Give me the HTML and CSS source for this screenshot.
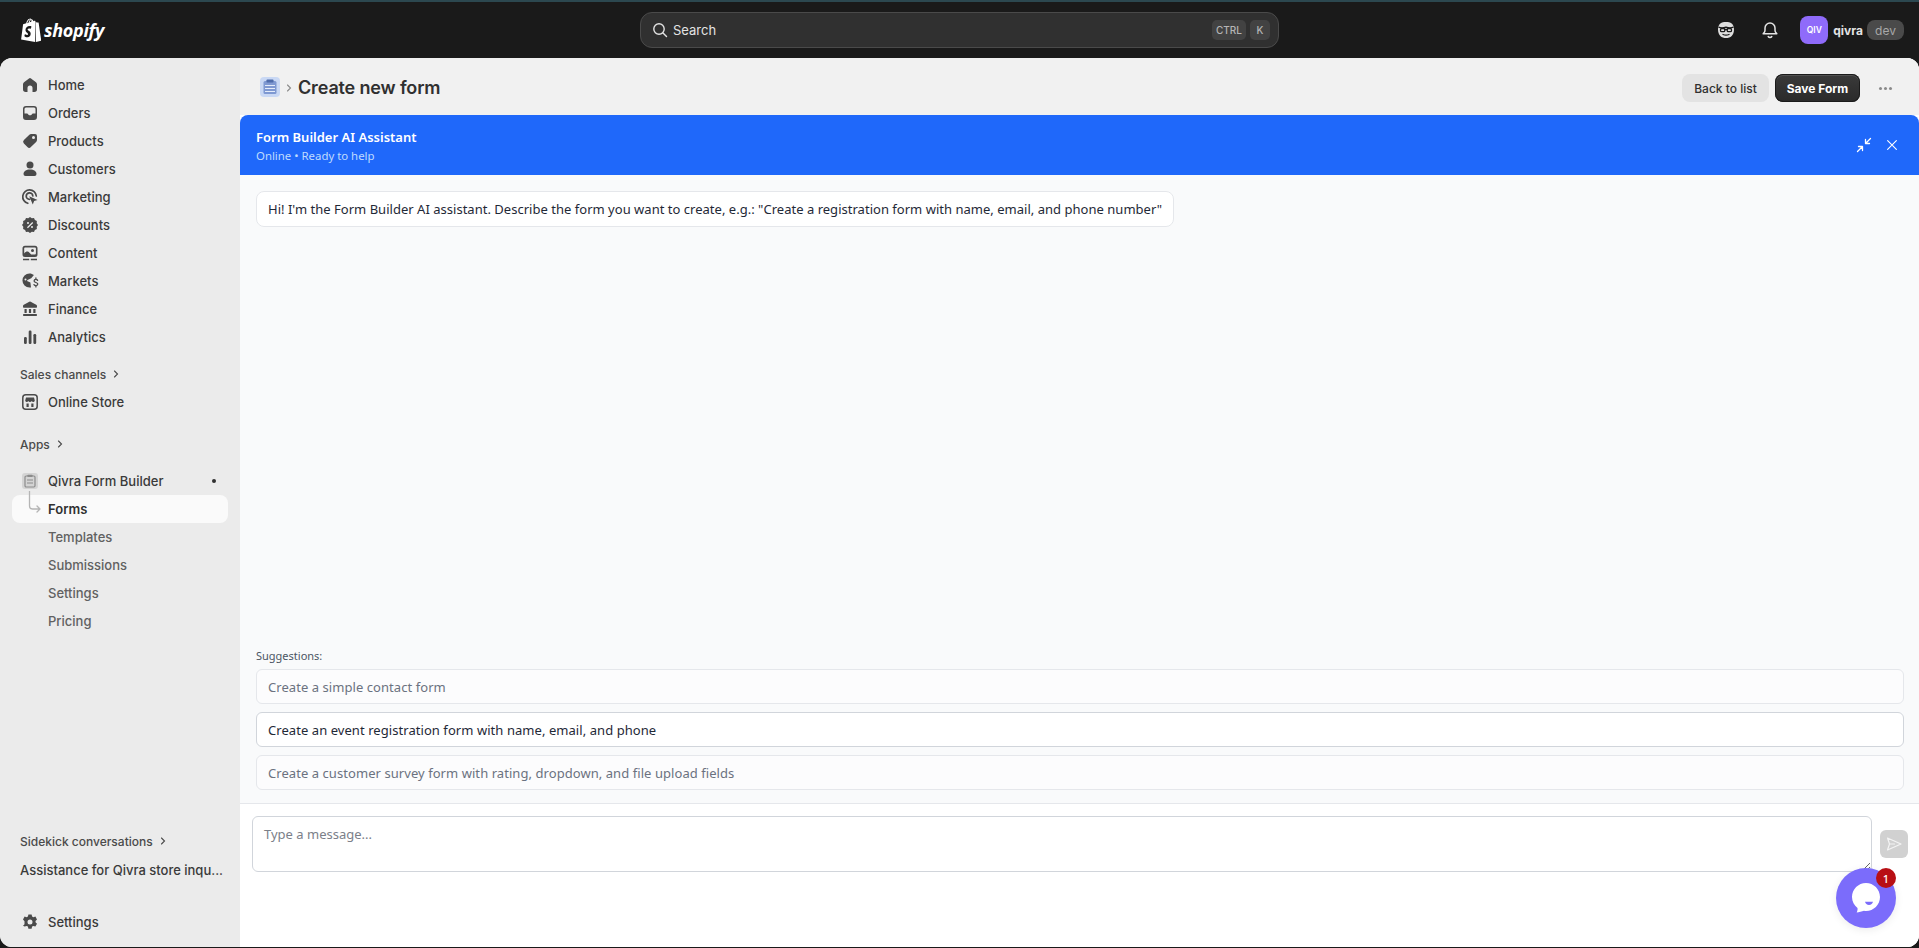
FILE: index.html
```html
<!DOCTYPE html>
<html lang="en">
<head>
<meta charset="utf-8">
<title>Create new form</title>
<link rel="stylesheet" href="styles.css">
</head>
<body>
<header class="topbar">
  <div class="brand">
    <svg class="brand-bag" viewBox="0 0 20 23"><path fill="#fff" d="M13.6 2.7 12.8 3c-.3-.9-.8-1.900-1.800-1.900h-.1C10.600.7 10.200.5 9.900.5 7.500.5 6.300 3.500 5.900 5L3.600 5.700c-.7.200-.7.200-.8.900L1 20.600 14.500 23V2.600c-.4 0-.7 0-.9.100ZM10.700 3.600l-1.500.500c.3-1.100.8-2.100 1.500-2.500.2.500.3 1.200 0 2ZM9.800 1.200c.1 0 .3 0 .4.100-.8.400-1.700 1.400-2.100 3.300L6.900 5c.4-1.300 1.300-3.800 2.900-3.800ZM15.300 22.900l5-1.200L17.800 4.500c0-.1-.1-.2-.2-.2l-1.800-.100-1-1z"/><path fill="#1a1a1a" d="M10.900 8.300 10.200 10.500s-.7-.4-1.600-.4c-1.300 0-1.300.8-1.300 1 0 1.100 2.900 1.500 2.900 4.100 0 2-1.300 3.300-3 3.300-2.100 0-3.100-1.300-3.100-1.300l.6-1.800s1.100.9 2 .9c.6 0 .9-.5.9-.8 0-1.400-2.400-1.500-2.400-3.900 0-2 1.400-3.900 4.300-3.900 1.100 0 1.400.6 1.400.6Z"/></svg>
    <span class="brand-name">shopify</span>
  </div>
  <div class="search">
    <svg class="search-icon" viewBox="0 0 16 16"><circle cx="7" cy="7" r="5.2" fill="none" stroke="#e3e3e3" stroke-width="1.400"/><path d="m11 11 3.500 3.500" stroke="#e3e3e3" stroke-width="1.400" stroke-linecap="round"/></svg>
    <span class="search-label">Search</span>
    <span class="kbd kbd-ctrl">CTRL</span>
    <span class="kbd">K</span>
  </div>
  <div class="top-actions">
    <svg class="top-icon top-icon-face" viewBox="0 0 20 20"><path fill="#dedede" d="M10 2c-4.500 0-8 1.800-8 7.500C2 15.500 5.500 18 10 18s8-2.500 8-8.500C18 3.800 14.500 2 10 2Z"/><path fill="none" stroke="#1a1a1a" stroke-width="1.400" d="M2.500 7.200c2.500 1 4.500 1 7.500 0 3 1 5 1 7.500 0"/><rect x="4.500" y="8.500" width="4.300" height="3.200" rx="1.200" fill="none" stroke="#1a1a1a" stroke-width="1.300"/><rect x="11.200" y="8.500" width="4.300" height="3.200" rx="1.200" fill="none" stroke="#1a1a1a" stroke-width="1.300"/><path d="M8.800 9.500h2.400M7 14.500c2 .8 4 .8 6 0" fill="none" stroke="#1a1a1a" stroke-width="1.300" stroke-linecap="round"/></svg>
    <svg class="top-icon top-icon-bell" viewBox="0 0 20 20"><path fill="none" stroke="#e3e3e3" stroke-width="1.500" stroke-linejoin="round" d="M10 3a5 5 0 0 0-5 5v2.200c0 1-.4 1.900-1.200 2.800l-.6.800h13.600l-.6-.8c-.8-.9-1.200-1.800-1.200-2.800V8a5 5 0 0 0-5-5Z"/><path fill="none" stroke="#e3e3e3" stroke-width="1.500" stroke-linecap="round" d="M8.200 16.500c.4.600 1 1 1.800 1s1.400-.4 1.800-1"/></svg>
    <div class="avatar">QIV</div>
    <span class="shop-name">qivra</span>
    <span class="dev-pill">dev</span>
  </div>
</header>

<div class="shell">
  <nav class="sidebar">
    <ul class="nav-list">
      <li class="nav-item"><svg class="nav-icon" viewBox="0 0 20 20"><path d="M9 3.400a1.700 1.700 0 0 1 2 0l5 3.900c.7.600 1 1.300 1 2.200v4.800a2.700 2.700 0 0 1-2.700 2.700H12.500v-4a2.500 2.500 0 0 0-5 0v4H5.700A2.700 2.700 0 0 1 3 14.300V9.500c0-.9.300-1.600 1-2.200z"/></svg>Home</li>
      <li class="nav-item"><svg class="nav-icon" viewBox="0 0 20 20"><path fill-rule="evenodd" d="M6 3h8a3 3 0 0 1 3 3v8a3 3 0 0 1-3 3H6a3 3 0 0 1-3-3V6a3 3 0 0 1 3-3Zm-1.500 7.500V6A1.500 1.500 0 0 1 6 4.500h8A1.500 1.500 0 0 1 15.500 6v4.500H13c-.5 0-.8.200-1 .6l-.4.700c-.2.300-.5.500-.9.500H9.300c-.4 0-.7-.200-.9-.5l-.4-.7c-.2-.4-.5-.6-1-.6z"/></svg>Orders</li>
      <li class="nav-item"><svg class="nav-icon" viewBox="0 0 20 20"><path fill-rule="evenodd" d="M11.200 3H15a2 2 0 0 1 2 2v3.800c0 .8-.3 1.500-.9 2.100l-5.200 5.200a2.500 2.500 0 0 1-3.500 0l-3.500-3.500a2.500 2.500 0 0 1 0-3.500l5.200-5.200A3 3 0 0 1 11.200 3Zm2.300 5a1.500 1.500 0 1 0 0-3 1.500 1.500 0 0 0 0 3Z"/></svg>Products</li>
      <li class="nav-item"><svg class="nav-icon" viewBox="0 0 20 20"><circle cx="10" cy="6" r="3.500"/><path d="M3.500 15c0-2.500 2.500-4.500 6.500-4.500s6.500 2 6.500 4.500a2 2 0 0 1-2 2h-9a2 2 0 0 1-2-2Z"/></svg>Customers</li>
      <li class="nav-item"><svg class="nav-icon" viewBox="0 0 20 20"><path fill="none" stroke="currentColor" stroke-width="1.700" stroke-linecap="round" d="M7.800 16.300A6.800 6.800 0 1 1 16.300 9M9.600 12.400A3.300 3.300 0 1 1 12.800 9"/><path d="M9.200 9.200l8.300 3.700-3.400 1.200-1.300 3.500z"/></svg>Marketing</li>
      <li class="nav-item"><svg class="nav-icon" viewBox="0 0 20 20"><path fill-rule="evenodd" d="M10 2l1.800 1.300 2.200-.2.900 2 2 .9-.2 2.200L18 10l-1.300 1.800.2 2.200-2 .9-.9 2-2.200-.2L10 18l-1.800-1.300-2.200.2-.9-2-2-.9.2-2.200L2 10l1.300-1.800-.2-2.200 2-.9.9-2 2.200.2ZM12.300 7 7 12.300l.9.900 5.300-5.300ZM8 8.900a1 1 0 1 0 0-2 1 1 0 0 0 0 2Zm4 4.200a1 1 0 1 0 0-2 1 1 0 0 0 0 2Z"/></svg>Discounts</li>
      <li class="nav-item"><svg class="nav-icon" viewBox="0 0 20 20"><path fill-rule="evenodd" d="M5 2.800h10a2.500 2.500 0 0 1 2.500 2.500v6.200a2.500 2.500 0 0 1-2.500 2.500H5a2.500 2.500 0 0 1-2.500-2.500V5.300A2.500 2.500 0 0 1 5 2.800Zm-.8 7.700c1.500-2 3-2.500 4.500-1.500l2.500 2.500H15c.6 0 .9-.4.900-1V5.300c0-.5-.4-.9-.9-.9H5c-.5 0-.8.400-.8.900ZM12.500 9a1.500 1.500 0 1 0 0-3 1.500 1.500 0 0 0 0 3Z"/><path d="M3 15.800h6.200v1.400H3zM10.800 15.800H17v1.400h-6.200z"/></svg>Content</li>
      <li class="nav-item"><svg class="nav-icon" viewBox="0 0 20 20"><path fill-rule="evenodd" d="M9.500 2.500c1.700 0 3.200.6 4.400 1.500l-2.700 3.200-3.700 1.800c-.5.300-.5 1 0 1.200l2.900 1.300.6 4.900c-.5.100-1 .2-1.500.2a7 7 0 0 1 0-14.100Zm-4 5a1 1 0 0 0 0 2 1 1 0 0 0 0-2Z"/><path fill="none" stroke="currentColor" stroke-width="1.300" stroke-linecap="round" d="M17.600 9.400c-.3-.6-1-1-1.700-1-1 0-1.800.6-1.800 1.500 0 2 3.700 1.200 3.700 3.200 0 .9-.8 1.500-1.900 1.500-.8 0-1.500-.4-1.900-1M15.900 7v1.300M15.900 14.600v1.300"/></svg>Markets</li>
      <li class="nav-item"><svg class="nav-icon" viewBox="0 0 20 20"><path d="M9.300 2.800a1.500 1.500 0 0 1 1.400 0l5.500 3c.5.300.8.800.8 1.300V8a.7.700 0 0 1-.7.700H3.700A.7.700 0 0 1 3 8v-.9c0-.5.300-1 .8-1.300zM4.500 10h2.200v4H4.500zM8.900 10h2.200v4H8.900zM13.300 10h2.200v4h-2.200zM3.700 15h12.600c.4 0 .7.300.7.700v.6c0 .4-.3.700-.7.700H3.700a.7.700 0 0 1-.7-.7v-.6c0-.4.300-.7.700-.7Z"/></svg>Finance</li>
      <li class="nav-item"><svg class="nav-icon" viewBox="0 0 20 20"><rect x="4" y="10" width="2.800" height="7" rx="1.200"/><rect x="8.700" y="3.500" width="2.800" height="13.500" rx="1.200"/><rect x="13.400" y="7" width="2.800" height="10" rx="1.200"/></svg>Analytics</li>
    </ul>

    <div class="section-head section-sales">Sales channels<svg class="chev" viewBox="0 0 10 10"><path d="m3.500 2 3 3-3 3" fill="none" stroke="currentColor" stroke-width="1.100" stroke-linecap="round"/></svg></div>
    <div class="nav-item"><svg class="nav-icon" viewBox="0 0 20 20"><rect x="2.800" y="2.800" width="14.400" height="14.400" rx="3" fill="none" stroke="currentColor" stroke-width="1.500"/><path d="M6 5.500h8l.8 3a1.600 1.600 0 0 1-3 .6 2.100 2.100 0 0 1-3.600 0 1.600 1.600 0 0 1-3-.6zM6.500 11.500h2.200v3.500H6.500zM11.300 11.500h2.200v3.500h-2.200z"/></svg>Online Store</div>

    <div class="section-head section-apps">Apps<svg class="chev" viewBox="0 0 10 10"><path d="m3.500 2 3 3-3 3" fill="none" stroke="currentColor" stroke-width="1.100" stroke-linecap="round"/></svg></div>
    <div class="nav-item app-head">
      <svg class="nav-icon app-icon" viewBox="0 0 20 20"><rect x="2" y="2" width="16" height="16" rx="3" fill="#d4d4d4"/><rect x="5" y="5" width="10" height="11" rx="1.200" fill="none" stroke="#8c8c8c" stroke-width="1.200"/><rect x="7.500" y="3.700" width="5" height="2.300" rx=".6" fill="#8c8c8c"/><path d="M7 9h6M7 12h6" stroke="#8c8c8c" stroke-width="1.100"/></svg>
      <span class="app-name">Qivra Form Builder</span>
      <span class="app-dot"></span>
    </div>
    <div class="nav-item sub-item sub-active">
      <svg class="tree" viewBox="0 0 14 26"><path d="M1.500 0v15a3 3 0 0 0 3 3H12M9 15l3 3-3 3" fill="none" stroke="#b5b5b5" stroke-width="1.300" stroke-linecap="round" stroke-linejoin="round"/></svg>
      Forms
    </div>
    <div class="nav-item sub-item">Templates</div>
    <div class="nav-item sub-item">Submissions</div>
    <div class="nav-item sub-item">Settings</div>
    <div class="nav-item sub-item">Pricing</div>

    <div class="section-head section-sidekick">Sidekick conversations<svg class="chev" viewBox="0 0 10 10"><path d="m3.500 2 3 3-3 3" fill="none" stroke="currentColor" stroke-width="1.100" stroke-linecap="round"/></svg></div>
    <div class="section-head conv">Assistance for Qivra store inqu...</div>
    <div class="nav-item nav-settings"><svg class="nav-icon" viewBox="0 0 20 20"><path fill-rule="evenodd" d="M8.400 2.500h3.200l.5 2.100 1.300.7 2-.7 1.600 2.800-1.500 1.500v1.400l1.500 1.500-1.600 2.800-2-.7-1.300.7-.5 2.100H8.400l-.5-2.100-1.300-.7-2 .7L3 13.800l1.500-1.500V9.300L3 7.400l1.600-2.800 2 .7 1.300-.7ZM10 12.500a2.500 2.500 0 1 0 0-5 2.500 2.500 0 0 0 0 5Z"/></svg>Settings</div>
  </nav>

  <main class="main">
    <div class="titlebar">
      <svg class="title-icon" viewBox="0 0 20 20"><rect width="20" height="20" rx="4" fill="#c9d8f4"/><rect x="3.500" y="4" width="13" height="13" rx="1.500" fill="#7f99d2"/><rect x="6.500" y="2.500" width="7" height="3" rx=".8" fill="#4f6cab"/><path d="M5 8.500h10M5 11.500h10M5 14.500h10" stroke="#e4ecfa" stroke-width="1"/></svg>
      <svg class="title-chev" viewBox="0 0 10 10"><path d="m3.500 2 3 3-3 3" fill="none" stroke="#8a8a8a" stroke-width="1.100" stroke-linecap="round"/></svg>
      <h1 class="title">Create new form</h1>
      <button class="btn btn-plain">Back to list</button>
      <button class="btn btn-dark">Save Form</button>
      <span class="more"><i></i><i></i><i></i></span>
    </div>

    <section class="chat">
      <div class="chat-head">
        <div class="chat-head-text">
          <div class="chat-title">Form Builder AI Assistant</div>
          <div class="chat-sub">Online • Ready to help</div>
        </div>
        <svg class="head-icon head-collapse" viewBox="0 0 16 16"><path d="M1.500 14.500 6.500 9.500M2.500 9.500h4v4M14.500 1.500l-5 5M13.500 6.500h-4v-4" fill="none" stroke="#fff" stroke-width="1.300" stroke-linecap="round" stroke-linejoin="round"/></svg>
        <svg class="head-icon head-close" viewBox="0 0 16 16"><path d="m3 3 10 10M13 3 3 13" fill="none" stroke="#fff" stroke-width="1.300" stroke-linecap="round"/></svg>
      </div>

      <div class="chat-body">
        <div class="bubble">Hi! I'm the Form Builder AI assistant. Describe the form you want to create, e.g.: "Create a registration form with name, email, and phone number"</div>
        <div class="suggest">
          <div class="suggest-label">Suggestions:</div>
          <div class="suggest-item">Create a simple contact form</div>
          <div class="suggest-item suggest-hover">Create an event registration form with name, email, and phone</div>
          <div class="suggest-item">Create a customer survey form with rating, dropdown, and file upload fields</div>
        </div>
      </div>

      <div class="composer">
        <textarea class="composer-input" placeholder="Type a message..."></textarea>
        <button class="send" aria-label="Send"><svg viewBox="0 0 16 16"><path d="M1.500 2 15 8 1.500 14l2-6zM3.500 8h5" fill="none" stroke="#f4f4f4" stroke-width="1.200" stroke-linejoin="round" stroke-linecap="round"/></svg></button>
      </div>
    </section>

    <div class="widget">
      <svg class="widget-icon" viewBox="0 0 30 32"><path fill="#fff" d="M15 1C7.300 1 1 7.300 1 15c0 4.500 2.200 8.500 5.500 11 .3 1.500-.2 3-.8 4.500 2.200-.2 5.300-1.100 7.300-1.700.7.100 1.300.2 2 .2 7.700 0 14-6.300 14-14S22.700 1 15 1Z"/><path fill="#7b6cfb" d="M14 19.800h8c-.4 1.800-2 3.200-4 3.200s-3.600-1.400-4-3.200Z"/></svg>
      <span class="widget-badge">1</span>
    </div>
  </main>
</div>
</body>
</html>
```

FILE: styles.css
```css
* { box-sizing: border-box; }
html, body { margin: 0; height: 100%; }
body {
  height: 948px;
  overflow: hidden;
  background: #1a1a1a;
  font-family: Inter, "Liberation Sans", sans-serif;
  display: flex;
  flex-direction: column;
}

/* top bar */
.topbar {
  height: 58px;
  flex: none;
  border-top: 2px solid #2c4850;
  display: grid;
  grid-template-columns: 1fr 639px 1fr;
  align-items: center;
  padding: 0 15px;
  color: #e3e3e3;
}
.brand { display: flex; align-items: center; gap: 3px; margin-left: 5px; }
.brand-bag { width: 21px; height: 24px; }
.brand-name {
  font-family: "Open Sans", sans-serif;
  font-size: 18px;
  font-weight: 700;
  font-style: italic;
  color: #fff;
  letter-spacing: -0.3px;
}
.search {
  height: 36px;
  display: flex;
  align-items: center;
  background: #303030;
  border: 1px solid #4a4a4a;
  border-radius: 12px;
  padding: 0 8px 0 11px;
  gap: 4px;
}
.search-icon { width: 16px; height: 16px; }
.search-label { font-size: 13px; color: #e3e3e3; flex: 1; margin-left: 1px; }
.kbd {
  height: 20px;
  min-width: 20px;
  padding: 0 4px;
  border-radius: 5px;
  background: #424242;
  color: #b5b5b5;
  font-size: 10px;
  font-weight: 500;
  display: flex;
  align-items: center;
  justify-content: center;
}
.kbd-ctrl { width: 34px; }
.top-actions { display: flex; align-items: center; justify-content: flex-end; }
.top-icon { width: 20px; height: 20px; }
.top-icon-face { margin-right: 24px; }
.top-icon-bell { margin-right: 20px; }
.avatar {
  width: 28px;
  height: 28px;
  border-radius: 8px;
  background: #8f6bfa;
  color: #fff;
  font-size: 8.500px;
  font-weight: 600;
  display: flex;
  align-items: center;
  justify-content: center;
}
.shop-name { font-size: 12px; font-weight: 650; color: #e3e3e3; margin-left: 5px; }
.dev-pill {
  margin-left: 4px;
  height: 20px;
  width: 37px;
  border-radius: 8px;
  background: #4a4a4a;
  color: #a8a8a8;
  font-size: 12px;
  display: flex;
  align-items: center;
  justify-content: center;
}

/* shell */
.shell {
  height: 889px;
  flex: none;
  display: flex;
  border-radius: 12px;
  overflow: hidden;
  background: #fff;
}

/* sidebar */
.sidebar {
  width: 240px;
  flex: none;
  background: #ebebeb;
  padding: 13px 12px 11px;
  display: flex;
  flex-direction: column;
  color: #303030;
}
.nav-list { list-style: none; margin: 0; padding: 0; }
.nav-item {
  height: 28px;
  display: flex;
  align-items: center;
  padding-left: 8px;
  gap: 8px;
  border-radius: 8px;
  font-size: 13px;
  font-weight: 450;
  color: #3a3a3a;
}
.nav-icon { width: 20px; height: 20px; fill: #4a4a4a; color: #4a4a4a; flex: none; }
.section-head {
  height: 28px;
  display: flex;
  align-items: center;
  padding-left: 8px;
  font-size: 12px;
  font-weight: 500;
  color: #4a4a4a;
}
.chev { width: 10px; height: 10px; margin-left: 5px; }
.section-sales { margin-top: 9px; }
.section-apps { margin-top: 14px; margin-bottom: 9px; }
.section-sidekick { margin-top: auto; }
.conv { font-size: 13px; color: #3a3a3a; margin-top: 1px; }
.nav-settings { margin-top: 24px; }
.app-name { flex: 1; }
.app-dot {
  width: 4px;
  height: 4px;
  border-radius: 50%;
  background: #303030;
  margin-right: 12px;
}
.sub-item { padding-left: 36px; color: #616161; position: relative; }
.sub-active { background: #fafafa; color: #303030; font-weight: 600; }
.tree {
  position: absolute;
  left: 16px;
  top: -4px;
  width: 14px;
  height: 26px;
}

/* main */
.main {
  flex: 1;
  min-width: 0;
  display: flex;
  flex-direction: column;
  background: #fff;
  position: relative;
}
.titlebar {
  height: 57px;
  flex: none;
  background: #f1f1f1;
  display: flex;
  align-items: center;
  padding: 3px 26px 0 20px;
}
.title-icon { width: 20px; height: 20px; flex: none; margin-top: -2px; }
.title-chev { width: 10px; height: 10px; margin: 0 4px; }
.title {
  margin: -1px auto 0 0;
  font-size: 18px;
  font-weight: 600;
  letter-spacing: -0.15px;
  color: #303030;
}
.btn {
  height: 28px;
  border: 0;
  border-radius: 8px;
  font-family: inherit;
  font-size: 12px;
  font-weight: 500;
}
.btn-plain { width: 87px; background: #e3e3e3; color: #303030; }
.btn-dark {
  width: 85px;
  margin-left: 6px;
  background: linear-gradient(#3a3a3a, #2a2a2a);
  color: #fff;
  font-weight: 650;
  box-shadow: 0 0 0 1px #1a1a1a inset, 0 1px 0 1px rgba(255,255,255,.12) inset;
}
.more { display: flex; gap: 2px; margin-left: 19px; width: 14px; }
.more i { width: 3px; height: 3px; border-radius: 50%; background: #8a8a8a; flex: none; }

/* chat */
.chat {
  flex: 1;
  min-height: 0;
  display: flex;
  flex-direction: column;
  font-family: "Noto Sans", "Open Sans", sans-serif;
}
.chat-head {
  height: 60px;
  flex: none;
  background: #1f68fa;
  border-radius: 8px 8px 0 0;
  display: flex;
  align-items: center;
  padding: 0 16px;
  color: #fff;
}
.chat-head-text { flex: 1; padding-top: 2px; }
.chat-title { font-size: 13px; font-weight: 600; line-height: 19px; }
.chat-sub { font-size: 11.400px; color: #bfdbfe; line-height: 17px; }
.head-icon { width: 16px; height: 16px; }
.head-close { margin-left: 13px; margin-right: 4px; width: 14px; height: 14px; }
.chat-body {
  height: 628px;
  flex: none;
  background: #f9fafb;
  padding: 16px 15px 13px 16px;
  display: flex;
  flex-direction: column;
  justify-content: space-between;
  align-items: flex-start;
}
.bubble {
  height: 36px;
  padding: 0 11px;
  display: flex;
  align-items: center;
  background: #fff;
  border: 1px solid #e5e7eb;
  border-radius: 8px;
  font-size: 13px;
  letter-spacing: 0.02px;
  color: #1f2937;
}
.suggest {
  align-self: stretch;
  display: flex;
  flex-direction: column;
  gap: 8px;
}
.suggest-label {
  font-size: 11px;
  line-height: 16px;
  color: #4b5563;
  margin-bottom: -3px;
}
.suggest-item {
  height: 35px;
  padding: 0 11px;
  display: flex;
  align-items: center;
  background: #fcfcfd;
  border: 1px solid #e5e7eb;
  border-radius: 6px;
  font-size: 13px;
  letter-spacing: 0.06px;
  color: #6b7280;
}
.suggest-hover { background: #fff; border-color: #d1d5db; color: #1f2937; }
.composer {
  flex: 1;
  border-top: 1px solid #e5e7eb;
  background: #fff;
  padding: 12px 11px 0 12px;
  display: flex;
  align-items: flex-start;
  gap: 8px;
}
.composer-input {
  flex: 1;
  height: 56px;
  padding: 8px 11px;
  border: 1px solid #d1d5db;
  border-radius: 6px;
  font-family: inherit;
  font-size: 13px;
  outline: none;
}
.composer-input::placeholder { color: #7b8089; }
.send {
  width: 28px;
  height: 28px;
  margin-top: 14px;
  border: 0;
  border-radius: 6px;
  background: #d1d1d1;
  padding: 6px;
  display: flex;
}
.send svg { width: 16px; height: 16px; }

/* floating support widget */
.widget {
  position: absolute;
  right: 23px;
  bottom: 19px;
  width: 60px;
  height: 60px;
  border-radius: 50%;
  background: #7b6cfb;
  display: flex;
  align-items: center;
  justify-content: center;
  box-shadow: 0 2px 8px rgba(0,0,0,.08);
}
.widget-icon { width: 30px; height: 32px; }
.widget-badge {
  position: absolute;
  right: 0;
  top: 0;
  width: 20px;
  height: 20px;
  border-radius: 50%;
  background: #b80f14;
  color: #fff;
  font-family: "Noto Sans", sans-serif;
  font-size: 11px;
  font-weight: 500;
  display: flex;
  align-items: center;
  justify-content: center;
}
```
